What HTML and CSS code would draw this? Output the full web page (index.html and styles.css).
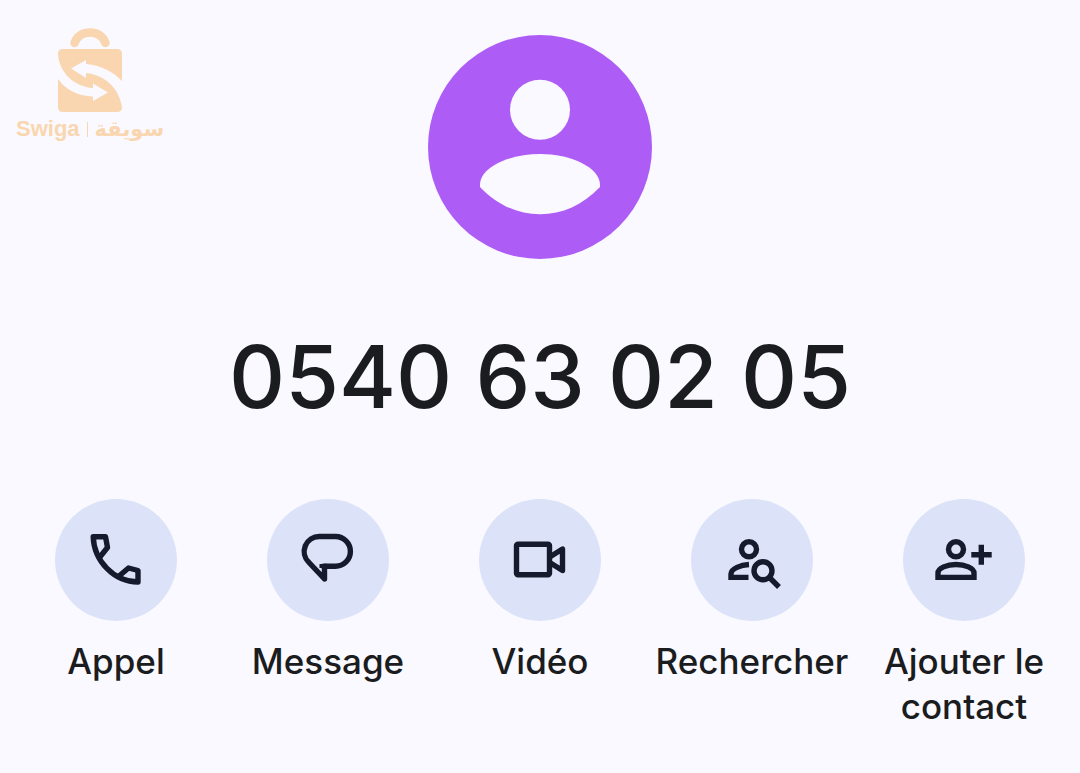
FILE: index.html
```
<!DOCTYPE html>
<html lang="fr">
<head>
<meta charset="utf-8">
<meta name="viewport" content="width=device-width, initial-scale=1">
<title>0540 63 02 05</title>
<link rel="stylesheet" href="styles.css">
</head>
<body>
<div class="brand">
  <svg class="brand-mark" viewBox="0 0 66 86" aria-hidden="true">
    <path d="M17.500 16C20 9 26 5.500 33 5.500S46 9 48.500 16" fill="none" stroke="currentColor" stroke-width="8.500" stroke-linecap="round"/>
    <path d="M1 27Q1 22 6 22H60Q65 22 65 27V54C57 46 45 38 29 37V33L14 41.500L29 51V46C48 48 62 61 65 80Q65 85 60 85H6Q1 85 1 80V52C8 62 20 69 36 69.500V74L51 65.500L36 56.500V61C18 60 2 46 1 27Z" fill="currentColor"/>
  </svg>
  <p class="brand-name"><span>Swiga</span><span class="brand-rule"></span><span class="brand-arabic" lang="ar" dir="rtl">سويقة</span></p>
</div>
<main class="contact">
  <svg class="avatar" viewBox="0 0 224 224" role="img" aria-label="Contact">
    <circle cx="112" cy="112" r="112" fill="#ae5cf6"/>
    <circle cx="112" cy="74.700" r="30" fill="#f9f9ff"/>
    <path d="M52 150C52 132 82 119 112 119S172 132 172 150V152C155 170 134 179.300 112 179.300S69 170 52 152Z" fill="#f9f9ff"/>
  </svg>
  <h1 class="number">0540 63 02 05</h1>
  <div class="actions">
    <button class="action" type="button">
      <svg class="icon" viewBox="0 0 122 122" aria-hidden="true"><path d="M44.500 58.500L52.500 48.500L50.500 37.700H38.200C39 62 59 83 83 83V71.500L73.500 69L63.500 77.500"/></svg>
      <span>Appel</span>
    </button>
    <button class="action" type="button">
      <svg class="icon" viewBox="0 0 122 122" aria-hidden="true"><path d="M52.500 37.500H68.500A14.900 14.900 0 0 1 68.500 67.300H57.500V80L42 63.500A15 15 0 0 1 52.500 37.500Z"/><path d="M55 65V69M54.800 67.300H60" stroke-width="5"/></svg>
      <span>Message</span>
    </button>
    <button class="action" type="button">
      <svg class="icon" viewBox="0 0 122 122" aria-hidden="true"><rect x="37.500" y="45.200" width="33" height="30.600" rx="1.500"/><path d="M71.500 57.500L83.500 50V71.500L71.500 64"/></svg>
      <span>Vidéo</span>
    </button>
    <button class="action" type="button">
      <svg class="icon sharp" viewBox="0 0 122 122" aria-hidden="true"><circle cx="58" cy="50.300" r="7.500"/><path d="M58 65.500C50 66 40 69.500 40 75V78.400H57.500"/><circle cx="72" cy="71.700" r="9"/><path d="M78 78L88 88"/></svg>
      <span>Rechercher</span>
    </button>
    <button class="action" type="button">
      <svg class="icon sharp" viewBox="0 0 122 122" aria-hidden="true"><circle cx="53" cy="50.300" r="7.500"/><path d="M35 78.400V74C35 69 44 65.500 53 65.500S71 69 71 74V78.400ZM78.300 45.700V65.700M68.300 55.700H88.700"/></svg>
      <span>Ajouter le contact</span>
    </button>
  </div>
</main>
</body>
</html>
```
FILE: styles.css
```
* {
  box-sizing: border-box;
}

body {
  margin: 0;
  min-height: 100vh;
  background: #f9f9ff;
  color: #1b1c20;
  font-family: Inter, "Liberation Sans", sans-serif;
}

.brand {
  position: absolute;
  top: 27px;
  left: 16px;
  display: flex;
  flex-direction: column;
  align-items: center;
  gap: 4px;
  color: #f9d6b0;
}

.brand-mark {
  width: 66px;
  height: 86px;
}

.brand-name {
  display: flex;
  align-items: center;
  gap: 7px;
  margin: 0;
  font: bold 22px/24px "Liberation Sans", sans-serif;
}

.brand-rule {
  width: 1px;
  height: 15px;
  background: currentColor;
}

.brand-arabic {
  font-family: "DejaVu Sans", sans-serif;
  font-size: 21px;
}

.contact {
  display: flex;
  flex-direction: column;
  align-items: center;
  padding: 35px 10px;
}

.avatar {
  width: 224px;
  height: 224px;
}

.number {
  margin: 68px 0 72px;
  font-size: 87px;
  font-weight: 500;
  line-height: 100px;
}

.actions {
  display: grid;
  grid-template-columns: repeat(5, minmax(0, 1fr));
  align-items: start;
  width: 100%;
}

.action {
  display: flex;
  flex-direction: column;
  align-items: center;
  gap: 18px;
  padding: 0 20px;
  border: 0;
  background: none;
  color: inherit;
  font: 500 35px/45px Inter, "Liberation Sans", sans-serif;
  cursor: pointer;
}

.icon {
  width: 122px;
  height: 122px;
  border-radius: 50%;
  background: #dce2f8;
  fill: none;
  stroke: #151b2d;
  stroke-width: 5.4;
  stroke-linejoin: round;
}

.sharp {
  stroke-linejoin: miter;
}
```
